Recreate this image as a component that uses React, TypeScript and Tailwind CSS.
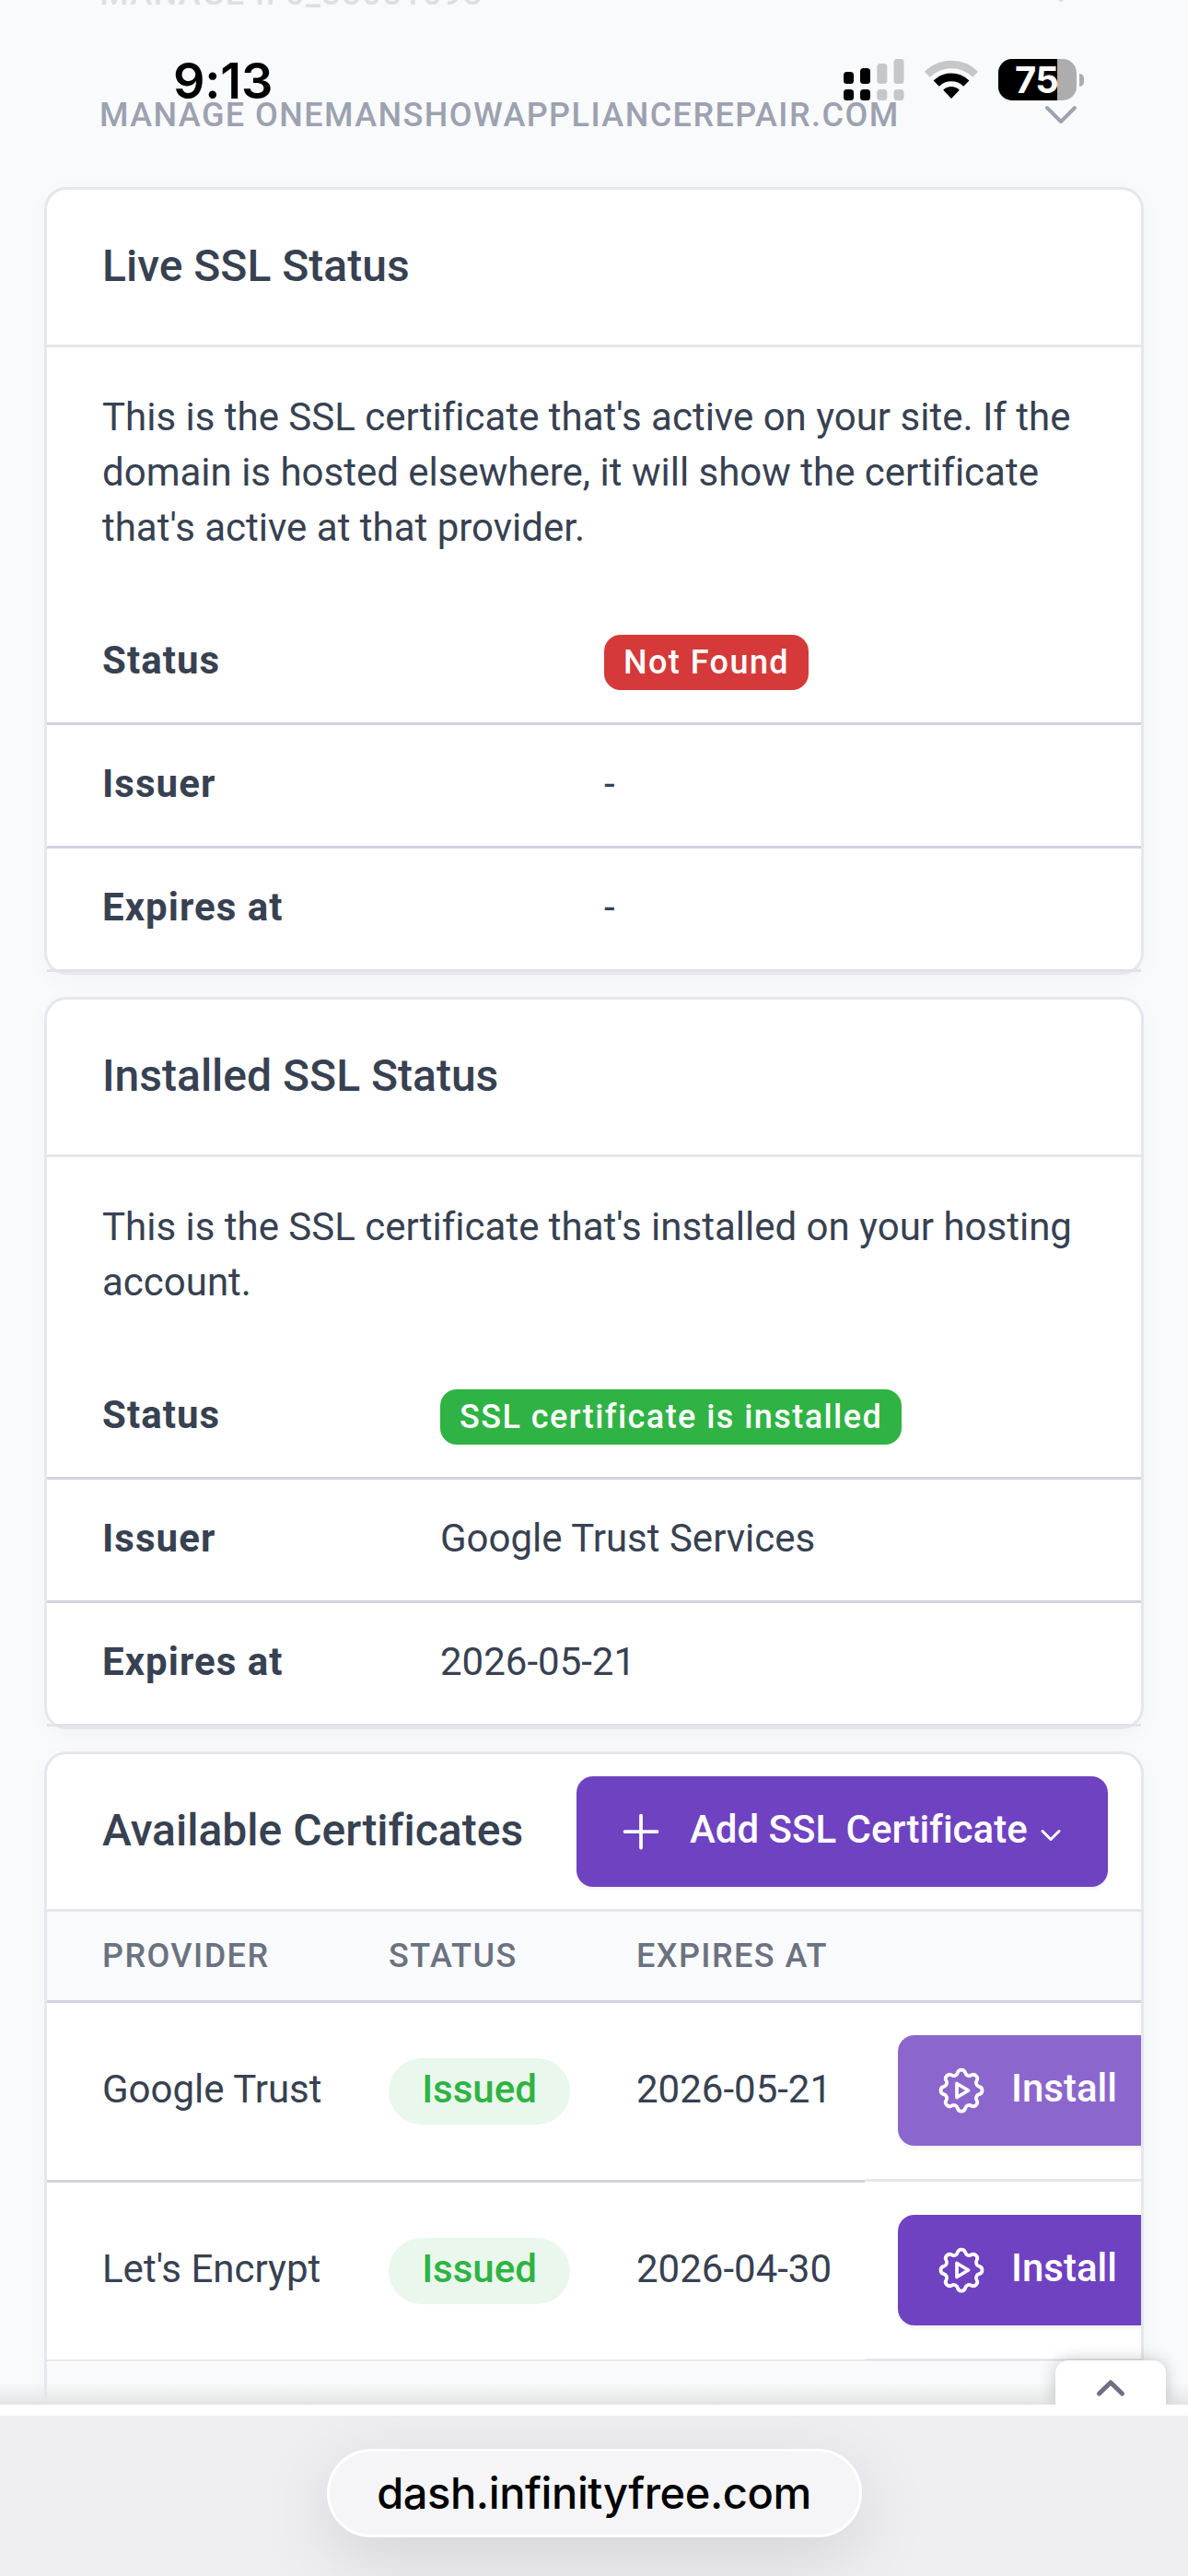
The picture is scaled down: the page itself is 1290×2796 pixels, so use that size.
import type { ReactNode } from 'react';

function StatusBar() {
  return (
    <div className="absolute inset-x-0 top-0 z-20 flex h-[140px] items-start justify-between pl-[188px] pr-[113px] pt-[64px]">
      <span className="pt-[1px] font-[Inter] text-[54px] leading-[46px] font-semibold tracking-[-0.200px] text-black">9:13</span>
      <div className="flex items-start gap-[22px]">
        <svg width="66" height="45" viewBox="0 0 66 45">
          <g fill="#000">
            <rect x="0" y="14" width="11" height="13" rx="3.5" />
            <rect x="18" y="10" width="11" height="17" rx="3.5" />
            <rect x="0" y="33" width="11" height="12" rx="3.5" />
            <rect x="18" y="33" width="11" height="12" rx="3.5" />
          </g>
          <g fill="#c6c7c8">
            <rect x="36.300" y="5" width="11" height="22" rx="3.5" />
            <rect x="54.500" y="0" width="11" height="27" rx="3.5" />
            <rect x="36.300" y="33" width="11" height="12" rx="3.5" />
            <rect x="54.500" y="33" width="11" height="12" rx="3.5" />
          </g>
        </svg>
        <svg width="58" height="45" viewBox="0 0 58 45">
          <path d="M2.900 16.800a37 37 0 0 1 52.200 0" fill="none" stroke="#c6c7c8" strokeWidth="8.500" />
          <path d="M12.700 26.700a23.100 23.100 0 0 1 32.600 0" fill="none" stroke="#000" strokeWidth="8.800" />
          <path d="M29 43l-8.800-9.300c4.600-4.900 13-4.900 17.600 0z" fill="#000" />
        </svg>
        <div className="flex items-center gap-[3px]">
          <div className="relative flex h-[45px] w-[85px] items-center overflow-hidden rounded-[15px] bg-[#adadae]">
            <div className="h-full w-[64px] bg-black" />
            <span className="absolute left-[18px] top-0 font-[Inter] text-[40px] leading-[45px] font-bold tracking-[-0.500px] text-white">
              75
            </span>
          </div>
          <div className="h-[14px] w-[5px] rounded-r-full bg-[#adadae]" />
        </div>
      </div>
    </div>
  );
}

function NavItem({ label, className }: { label: string; className: string }) {
  return (
    <div className={`flex h-[132px] items-center justify-between pl-[108px] pr-[118px] ${className}`}>
      <span className="pt-[2px] text-[36px] leading-[54px] font-medium tracking-[1.440px]">{label}</span>
      <svg width="40" height="24" viewBox="0 0 40 24" fill="none" stroke="currentColor" strokeWidth="4" strokeLinecap="round" strokeLinejoin="round">
        <path d="M5 5l15 15l15 -15" />
      </svg>
    </div>
  );
}

function Card({ title, action, children }: { title: string; action?: ReactNode; children: ReactNode }) {
  return (
    <section className="rounded-[24px] border-[3px] border-[#e5e7ec] bg-white shadow-[0_6px_24px_rgba(35,46,60,0.03)]">
      <header className="flex h-[171px] items-center justify-between border-b-[3px] border-[#e5e7ec] pl-[60px] pr-[36px]">
        <h2 className="pb-[2px] text-[48px] leading-[72px] font-medium">{title}</h2>
        {action}
      </header>
      {children}
    </section>
  );
}

const badgeColors = {
  red: 'bg-[#d63939]',
  green: 'bg-[#2fb344]',
};

function Badge({ color, children }: { color: keyof typeof badgeColors; children: ReactNode }) {
  return (
    <span className={`relative top-[2px] flex h-[60px] items-center rounded-[18px] px-[21px] text-[36px] font-medium tracking-[1.440px] text-white ${badgeColors[color]}`}>
      {children}
    </span>
  );
}

function Details({ columns, rows }: { columns: string; rows: [string, ReactNode][] }) {
  return (
    <dl>
      {rows.map(([label, value]) => (
        <div key={label} className={`grid h-[134px] items-center border-b-[3px] border-[#d0d4dc] pb-[4px] last:border-[#e1e3e9] ${columns}`}>
          <dt className="pl-[60px] leading-[60px] font-bold tracking-[1.050px]">{label}</dt>
          <dd className="flex pl-[36px] leading-[60px]">{value}</dd>
        </div>
      ))}
    </dl>
  );
}

function SettingsAutomationIcon() {
  return (
    <svg width="60" height="60" viewBox="0 0 24 24" fill="none" stroke="currentColor" strokeWidth="1.5" strokeLinecap="round" strokeLinejoin="round">
      <path d="M10.325 4.317c.426 -1.756 2.924 -1.756 3.35 0a1.724 1.724 0 0 0 2.573 1.066c1.543 -.94 3.31 .826 2.37 2.37a1.724 1.724 0 0 0 1.065 2.572c1.756 .426 1.756 2.924 0 3.35a1.724 1.724 0 0 0 -1.066 2.573c.94 1.543 -.826 3.31 -2.37 2.37a1.724 1.724 0 0 0 -2.572 1.065c-.426 1.756 -2.924 1.756 -3.35 0a1.724 1.724 0 0 0 -2.573 -1.066c-1.543 .94 -3.31 -.826 -2.37 -2.37a1.724 1.724 0 0 0 -1.065 -2.572c-1.756 -.426 -1.756 -2.924 0 -3.35a1.724 1.724 0 0 0 1.066 -2.573c-.94 -1.543 .826 -3.31 2.37 -2.37c1 .608 2.296 .07 2.572 -1.065" />
      <path d="M10 9v6l5 -3l-5 -3" />
    </svg>
  );
}

const certificates = [
  { provider: 'Google Trust', expires: '2026-05-21', installed: true },
  { provider: "Let's Encrypt", expires: '2026-04-30', installed: false },
];

function CertificateTable() {
  return (
    <div className="overflow-hidden">
      <div className="grid h-[99px] w-[1320px] grid-cols-[335px_269px_284px_1fr] items-center border-b-[3px] border-[#d0d4dc] bg-[#f9fafb] text-[36px] font-medium tracking-[1.440px] text-[#6b7280]">
        <span className="pl-[60px]">PROVIDER</span>
        <span className="pl-[36px]">STATUS</span>
        <span className="pl-[36px]">EXPIRES AT</span>
      </div>
      {certificates.map((cert, i) => (
        <div key={cert.provider} className="grid h-[195px] w-[1320px] grid-cols-[888px_1fr] last-of-type:h-[194px]">
          <div className={`grid grid-cols-[335px_269px_284px] items-center ${i === 0 ? 'h-[195px] border-b-[3px] border-[#d0d4dc]' : 'h-[194px] border-b-2 border-[#e5e7ec]'}`}>
            <span className="pb-[6px] pl-[60px]">{cert.provider}</span>
            <span className="ml-[36px] flex h-[72px] w-[197px] items-center justify-center rounded-full bg-[#eaf7ec] pb-[5px] font-medium text-[#2fb344]">
              Issued
            </span>
            <span className="pb-[6px] pl-[36px]">{cert.expires}</span>
          </div>
          <div className="h-[194px] border-b-[3px] border-[#e5e7ec] pl-[36px] pt-[35px]">
            <button className={`flex h-[120px] w-[320px] items-center rounded-[18px] bg-[#6f42c1] pl-[39px] font-medium text-white shadow-[0_3px_3px_rgba(35,46,60,0.06)] ${cert.installed ? 'opacity-80' : ''}`}>
              <SettingsAutomationIcon />
              <span className="pb-[5px] pl-[24px]">Install</span>
            </button>
          </div>
        </div>
      ))}
      <div className="h-[120px] bg-[#f9fafb]" />
    </div>
  );
}

function AddButton() {
  return (
    <button className="flex h-[120px] w-[577px] items-center rounded-[18px] bg-[#6f42c1] pl-[40px] font-medium text-white shadow-[0_3px_3px_rgba(35,46,60,0.06)]">
      <svg width="60" height="60" viewBox="0 0 24 24" fill="none" stroke="currentColor" strokeWidth="1.5" strokeLinecap="round">
        <path d="M12 5v14M5 12h14" />
      </svg>
      <span className="pb-[5px] pl-[23px]">Add SSL Certificate</span>
      <svg className="ml-[13px] mt-[7px]" width="24" height="16" viewBox="0 0 24 16" fill="none" stroke="currentColor" strokeWidth="3" strokeLinecap="round" strokeLinejoin="round">
        <path d="M3 3.500l9 9l9 -9" />
      </svg>
    </button>
  );
}

export default function App() {
  return (
    <div className="relative flex h-[2796px] w-[1290px] flex-col overflow-hidden bg-[#eeeef3] font-[Roboto] text-[42px] text-[#374151] [font-variant-ligatures:none]">
      <StatusBar />

      <main className="relative h-[2610px] overflow-hidden bg-[#f9fafc]">
        <nav className="mt-[-74px] flex flex-col">
          <NavItem label="MANAGE IF0_38051098" className="text-[#dcdfe4]" />
          <NavItem label="MANAGE ONEMANSHOWAPPLIANCEREPAIR.COM" className="text-[#9ca2af]" />
        </nav>

        <div className="mt-[13px] flex flex-col gap-[24px] px-[48px]">
          <Card title="Live SSL Status">
            <p className="px-[60px] pb-[50px] pt-[46px] leading-[60px]">
              This is the SSL certificate that's active on your site. If the domain is hosted elsewhere, it will show the
              certificate that's active at that provider.
            </p>
            <Details
              columns="grid-cols-[569px_1fr]"
              rows={[
                ['Status', <Badge color="red">Not Found</Badge>],
                ['Issuer', '-'],
                ['Expires at', '-'],
              ]}
            />
          </Card>

          <Card title="Installed SSL Status">
            <p className="px-[60px] pb-[50px] pt-[46px] leading-[60px]">
              This is the SSL certificate that's installed on your hosting account.
            </p>
            <Details
              columns="grid-cols-[391px_1fr]"
              rows={[
                ['Status', <Badge color="green">SSL certificate is installed</Badge>],
                ['Issuer', 'Google Trust Services'],
                ['Expires at', '2026-05-21'],
              ]}
            />
          </Card>

          <Card title="Available Certificates" action={<AddButton />}>
            <CertificateTable />
          </Card>
        </div>

        {/* toolbar edge shadow and its toggle tab */}
        <div className="absolute inset-x-0 bottom-0 h-[24px] bg-linear-to-b from-transparent to-[#e3e5e5]" />
        <div className="absolute bottom-0 right-[24px] flex h-[48px] w-[120px] justify-center rounded-t-[14px] bg-white pt-[18px] shadow-[0_0_18px_rgba(0,0,0,0.22)]">
          <svg width="36" height="24" viewBox="0 0 36 24" fill="none" stroke="#6f6e84" strokeWidth="5" strokeLinecap="round" strokeLinejoin="round">
            <path d="M5.500 18l12.500 -12l12.500 12" />
          </svg>
        </div>
      </main>

      <div className="h-[12px] bg-white" />
      <footer className="flex flex-1 items-start justify-center overflow-hidden pt-[36px]">
        <div className="flex h-[96px] w-[581px] items-center justify-center rounded-full border-[3px] border-white bg-[#f5f5f8] shadow-[0_20px_80px_rgba(0,0,0,0.12)]">
          <span className="font-[Inter] text-[47px] font-medium tracking-[-0.400px] text-black">dash.infinityfree.com</span>
        </div>
      </footer>
    </div>
  );
}
